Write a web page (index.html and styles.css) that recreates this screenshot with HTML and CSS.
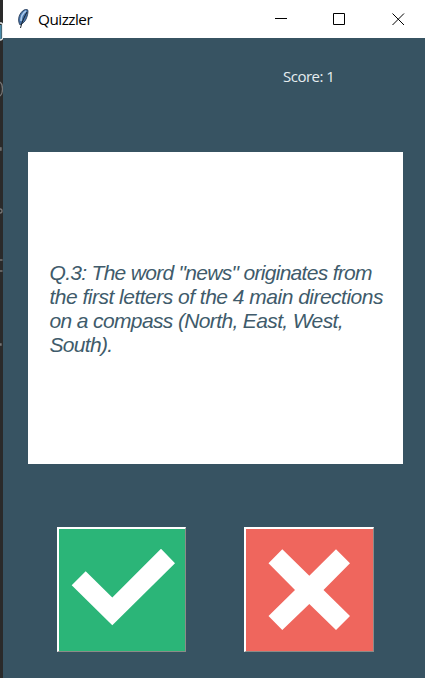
FILE: index.html
```html
<!DOCTYPE html>
<html lang="en">
<head>
<meta charset="utf-8">
<title>Quizzler</title>
<link rel="stylesheet" href="styles.css">
</head>
<body>
<div class="backdrop">
  <svg width="3" height="678" fill="none" stroke="#757575" stroke-width="1.3">
    <path d="M0 23h1q1.500 0 1.500 2v13q0 2-2.500 2" stroke="#e8eef0"/>
    <path d="M0 25h1.500v14H0z" fill="#4889a8" stroke="none"/>
    <path d="M0 82q2.500 2 2.500 7T0 96M0 148h1v2H0M0 209q2 0 2 2t-2 2M0 260h2.500M0 271h2.500M0 344h1v1H0"/>
  </svg>
</div>
<div class="window">
  <header class="titlebar">
    <svg class="feather" width="12" height="20" viewBox="0 0 12 20">
      <path d="M3 16C0 11 2 4 7 1c2-1 4-1 4 1 0 4-2 10-5 12z" fill="#4773a8" stroke="#20344f" stroke-width=".8"/>
      <path d="M4 12C4 8 6 4 9 2" stroke="#a9c9ec" stroke-width="1.600" fill="none"/>
      <path d="M10 3C8 7 5 12 3.500 19" stroke="#15202d" stroke-width="1" fill="none"/>
    </svg>
    <h1 class="title">Quizzler</h1>
    <svg class="controls" width="130" height="14" fill="none" stroke="#000">
      <path d="M0 6.500h12M58.500 1.500h11v11h-11zM117.500 1.500l11.500 11.500M129 1.500L117.500 13"/>
    </svg>
  </header>
  <main class="quiz">
    <p class="score">Score: 1</p>
    <section class="card">
      <p class="question">
        <span class="l1">Q.3: The word "news" originates from</span>
        <span class="l2">the first letters of the 4 main directions</span>
        <span class="l3">on a compass (North, East, West,</span>
        <span class="l4">South).</span>
      </p>
    </section>
    <div class="answers">
      <button class="answer yes" aria-label="True">
        <svg width="129" height="125"><path d="M14.700 58.300l14-14 26.600 26.200L104 21.700l14 14.600-62.700 62z" fill="#fff"/></svg>
      </button>
      <button class="answer no" aria-label="False">
        <svg width="130" height="125"><path d="M38.300 22.300l27 26.400L92 22.300l14 14L79.500 63 106 89l-14 14-26.700-26-27 26-13.800-14L51 63 24.500 36.300z" fill="#fff"/></svg>
      </button>
    </div>
  </main>
</div>
</body>
</html>
```
FILE: styles.css
```css
* { box-sizing: border-box; }
body {
  margin: 0;
  width: 425px;
  height: 678px;
  display: flex;
  overflow: hidden;
  background: #375362;
}
p, h1 { margin: 0; font-weight: 400; }
svg { display: block; }
.backdrop { width: 3px; background: #2a2a2a; }
.window { width: 422px; display: flex; flex-direction: column; }
.titlebar {
  height: 38px;
  display: flex;
  align-items: center;
  background: #fff;
  padding-left: 14px;
}
.title {
  margin-left: 9px;
  font: 400 15.3px/20px "Open Sans", sans-serif;
  letter-spacing: -0.5px;
  color: #000;
}
.controls { margin-left: auto; margin-right: 20px; }
.quiz {
  flex: 1;
  display: flex;
  flex-direction: column;
  background: #375362;
}
.score {
  height: 20px;
  margin: 28px 0 0 280px;
  font: 400 15px/20px "Open Sans", sans-serif;
  letter-spacing: -0.5px;
  color: #e6edf0;
}
.card {
  width: 375px;
  height: 312px;
  margin: 66px 0 0 25px;
  padding: 109px 0 0 21.5px;
  background: #fff;
}
.question {
  font: italic 400 21px/24px "Liberation Sans", sans-serif;
  color: #405b6b;
  white-space: nowrap;
}
.question span { display: block; }
.l1 { letter-spacing: -0.7px; }
.l2 { letter-spacing: -0.51px; }
.l3 { letter-spacing: -0.63px; }
.l4 { letter-spacing: -0.7px; }
.answers { display: flex; gap: 58px; margin: 63px 0 0 54px; }
.answer {
  width: 129px;
  height: 125px;
  padding: 0;
  border: solid;
  border-width: 2px 1px 1px 2px;
  border-color: #fff #8b8b88 #8b8b88 #fff;
}
.answer svg { margin: -2px -1px -1px -2px; }
.yes { background: #2bb578; }
.no { width: 130px; background: #ef665d; }
```
